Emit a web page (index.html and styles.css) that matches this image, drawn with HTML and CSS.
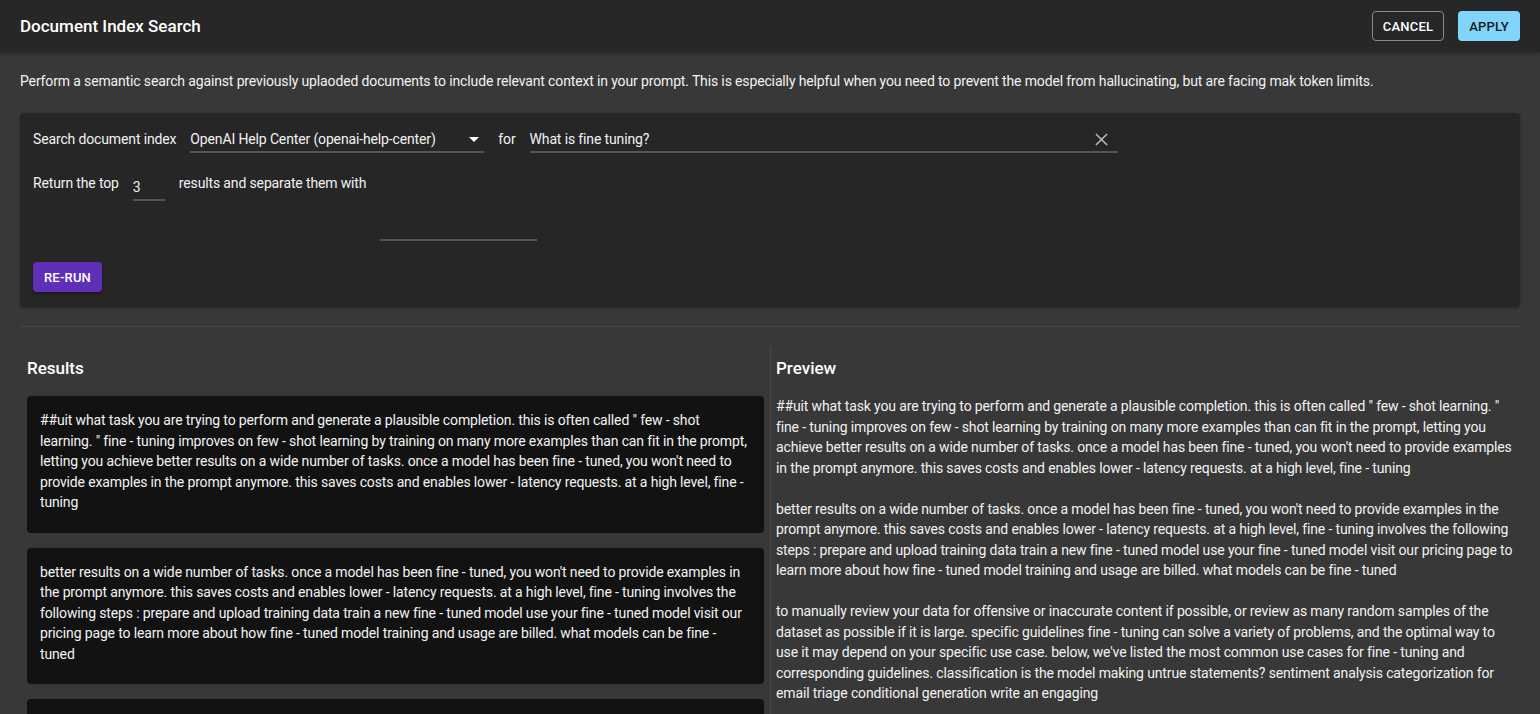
FILE: index.html
```html
<!DOCTYPE html>
<html>
<head>
  <meta charset="UTF-8">
  <title>Document Index Search</title>
  <link rel="stylesheet" href="styles.css">
</head>
<body>
  <header class="top-bar">
    <h1>Document Index Search</h1>
    <div class="actions">
      <button class="btn btn-outline">CANCEL</button>
      <button class="btn btn-apply">APPLY</button>
    </div>
  </header>

  <main class="content">
    <p class="intro">Perform a semantic search against previously uplaoded documents to include relevant context in your prompt. This is especially helpful when you need to prevent the model from hallucinating, but are facing mak token limits.</p>

    <section class="panel">
      <div class="row">
        <span class="label">Search document index</span>
        <div class="field select-field">
          <span>OpenAI Help Center (openai-help-center)</span>
          <svg class="caret" width="10" height="5" viewBox="0 0 10 5"><path d="M0 0h10L5 5z" fill="#fff"/></svg>
        </div>
        <span class="label">for</span>
        <div class="field query-field">
          <span>What is fine tuning?</span>
          <svg class="clear" width="13" height="13" viewBox="0 0 14 14"><path d="M1 1L13 13M13 1L1 13" stroke="#bdbdbd" stroke-width="1.6"/></svg>
        </div>
      </div>
      <div class="row row-top">
        <span class="label">Return the top</span>
        <div class="field count-field"><span>3</span></div>
        <span class="label">results and separate them with</span>
        <div class="field sep-field"></div>
      </div>
      <button class="btn btn-run">RE-RUN</button>
    </section>

    <hr class="divider">

    <div class="columns">
      <div class="col results">
        <h2>Results</h2>
        <div class="card">##uit what task you are trying to perform and generate a plausible completion. this is often called " few - shot learning. " fine - tuning improves on few - shot learning by training on many more examples than can fit in the prompt, letting you achieve better results on a wide number of tasks. once a model has been fine - tuned, you won't need to provide examples in the prompt anymore. this saves costs and enables lower - latency requests. at a high level, fine - tuning</div>
        <div class="card">better results on a wide number of tasks. once a model has been fine - tuned, you won't need to provide examples in the prompt anymore. this saves costs and enables lower - latency requests. at a high level, fine - tuning involves the following steps : prepare and upload training data train a new fine - tuned model use your fine - tuned model visit our pricing page to learn more about how fine - tuned model training and usage are billed. what models can be fine - tuned</div>
        <div class="card">to manually review your data for offensive or inaccurate content if possible, or review as many random samples of the dataset as possible if it is large. specific guidelines fine - tuning can solve a variety of problems, and the optimal way to use it may depend on your specific use case.</div>
      </div>
      <div class="col preview">
        <h2>Preview</h2>
        <p>##uit what task you are trying to perform and generate a plausible completion. this is often called " few - shot learning. " fine - tuning improves on few - shot learning by training on many more examples than can fit in the prompt, letting you achieve better results on a wide number of tasks. once a model has been fine - tuned, you won't need to provide examples in the prompt anymore. this saves costs and enables lower - latency requests. at a high level, fine - tuning</p>
        <p>better results on a wide number of tasks. once a model has been fine - tuned, you won't need to provide examples in the prompt anymore. this saves costs and enables lower - latency requests. at a high level, fine - tuning involves the following steps : prepare and upload training data train a new fine - tuned model use your fine - tuned model visit our pricing page to learn more about how fine - tuned model training and usage are billed. what models can be fine - tuned</p>
        <p>to manually review your data for offensive or inaccurate content if possible, or review as many random samples of the dataset as possible if it is large. specific guidelines fine - tuning can solve a variety of problems, and the optimal way to use it may depend on your specific use case. below, we've listed the most common use cases for fine - tuning and corresponding guidelines. classification is the model making untrue statements? sentiment analysis categorization for email triage conditional generation write an engaging</p>
      </div>
    </div>
  </main>
</body>
</html>
```

FILE: styles.css
```css
html, body { margin: 0; height: 100%; overflow: hidden; }
body { background: #383838; color: #f2f2f2; font-family: Roboto, "Liberation Sans", sans-serif; font-size: 14px; letter-spacing: -0.14px; }

.top-bar { display: flex; align-items: center; justify-content: space-between; height: 52px; padding: 0 20px; background: #272727; box-shadow: 0 2px 4px rgba(0,0,0,0.25); position: relative; }
.top-bar h1 { margin: 0; font-size: 17px; font-weight: 500; color: #fff; letter-spacing: 0; }
.actions { display: flex; gap: 14px; }

.btn { font-family: inherit; font-size: 13px; font-weight: 500; letter-spacing: 0.2px; height: 30px; padding: 0; border-radius: 4px; cursor: pointer; border: none; white-space: nowrap; }
.btn-outline { background: transparent; color: #fff; border: 1px solid #8a8a8a; width: 72px; }
.btn-apply { background: #81d4fa; color: #1a1a1a; width: 62px; }
.btn-run { background: #5f2fb8; color: #fff; width: 69px; box-shadow: 0 2px 3px rgba(0,0,0,0.35); }

.content { padding: 0 20px; }
.intro { margin: 19px 0 22px; line-height: 20px; }

.panel { background: #262626; border-radius: 4px; padding: 15px 13px; box-shadow: 0 1px 3px rgba(0,0,0,0.3); }
.row { display: flex; align-items: flex-start; gap: 14px; margin-bottom: 19px; }
.row-top { height: 78px; margin-bottom: 12px; }
.label { white-space: nowrap; line-height: 22px; }
.field { display: flex; align-items: center; justify-content: space-between; height: 22px; border-bottom: 2px solid #555; padding-bottom: 1px; }
.select-field { width: 294px; box-sizing: content-box; padding-right: 0; }
.select-field .caret { margin-right: 5px; }
.query-field { width: 588px; }
.query-field .clear { margin-right: 10px; }
.count-field { width: 32px; margin-top: 4px; }
.sep-field { width: 157px; height: 66px; }

.divider { border: none; border-top: 1px solid #474747; margin: 19px 0 20px; }

.columns { display: flex; }
.col { width: 50%; box-sizing: border-box; }
.col h2 { margin: 11px 0 18px; font-size: 17px; font-weight: 500; color: #fff; letter-spacing: 0; }
.results { padding: 0 6px 0 7px; }
.preview { border-left: 1px solid #474747; padding: 0 6px 0 5px; }

.card { background: #121212; border-radius: 4px; padding: 14px 13px 20px; line-height: 20.5px; margin-bottom: 15px; }
.preview p { margin: 0 0 20.5px; line-height: 20.5px; }
```
